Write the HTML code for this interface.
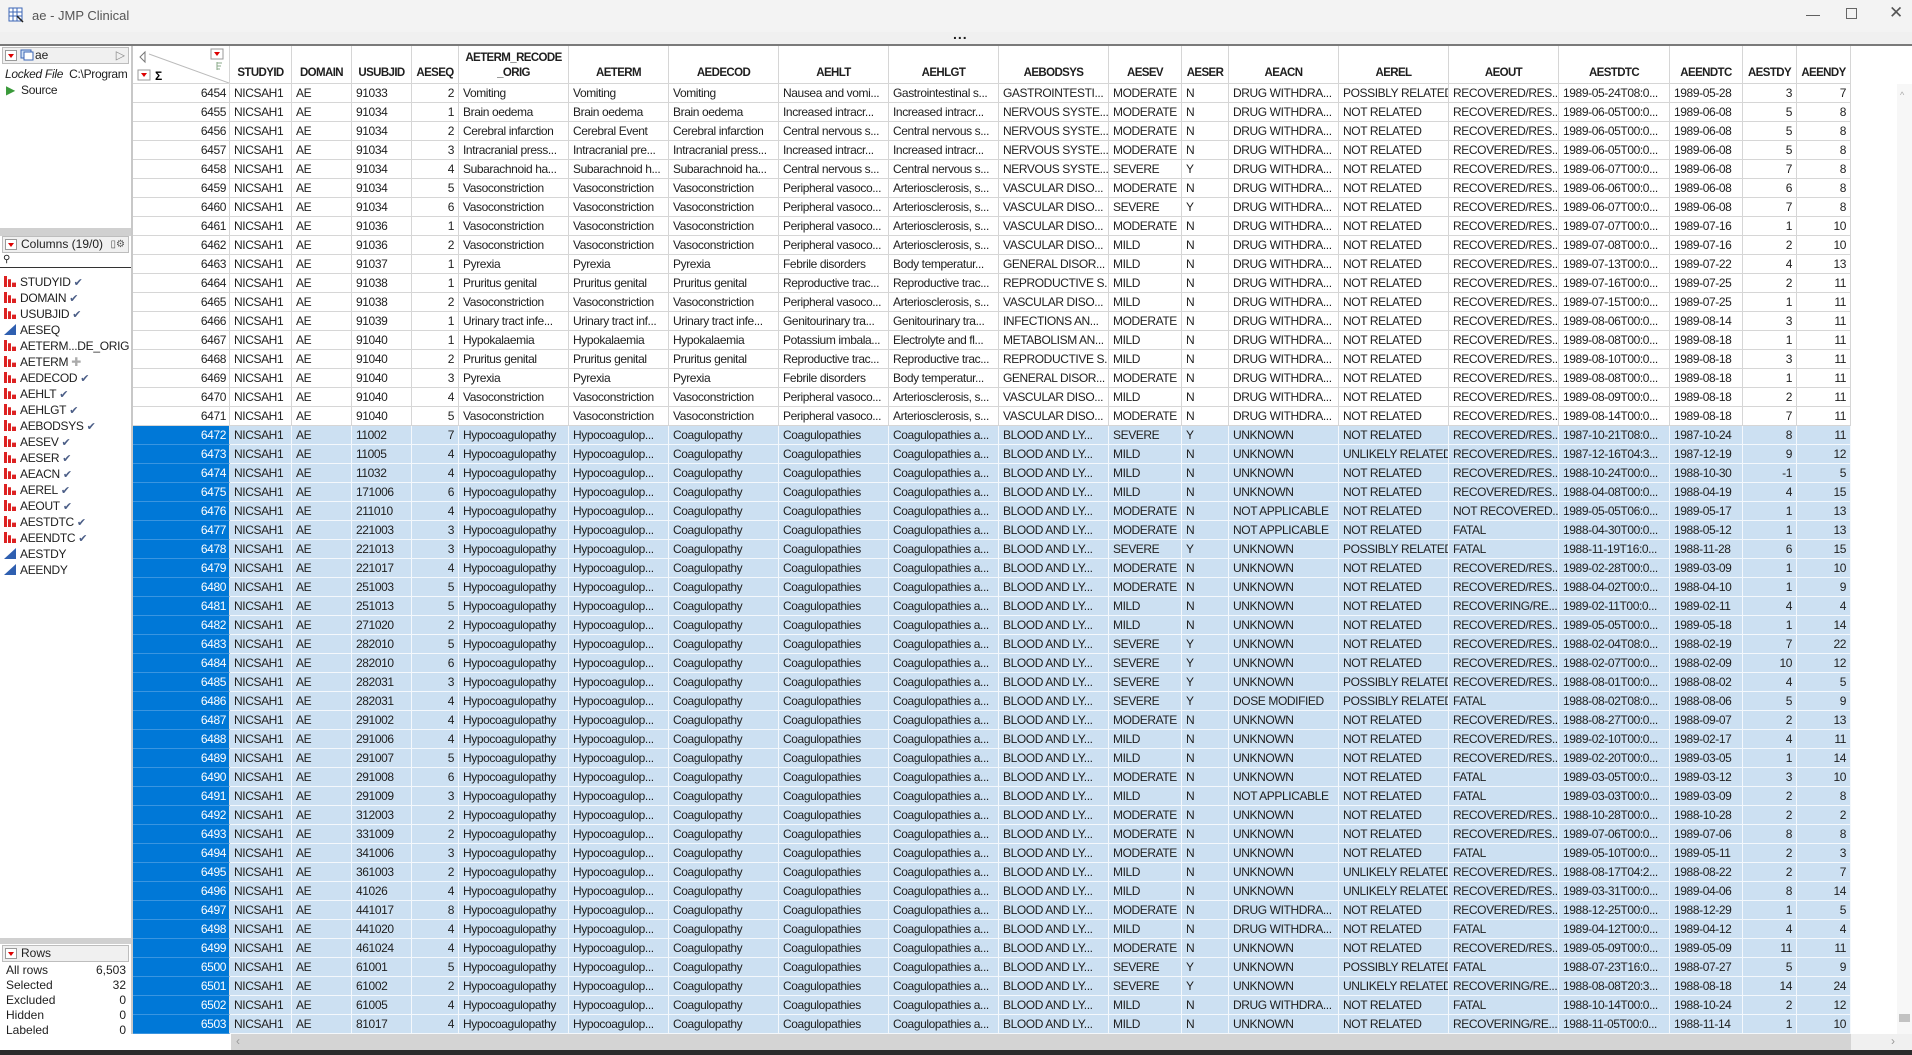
<!DOCTYPE html>
<html><head><meta charset="utf-8"><style>
*{box-sizing:border-box}
body{margin:0;width:1912px;height:1055px;overflow:hidden;background:#fff;font-family:"Liberation Sans",sans-serif;font-size:12px;color:#1e1e1e;position:relative}
.abs{position:absolute}
#tb{left:0;top:0;width:1912px;height:32px;background:#f3f3f3}
#strip{left:0;top:32px;width:1912px;height:12px;background:#f0f0f0}
#dark{left:0;top:44px;width:1912px;height:2px;background:#7a7a7a}
#grid{left:133px;top:46px;border-collapse:separate;border-spacing:0;table-layout:fixed;width:1718px}
#grid td,#grid th{height:19px;padding:0 4px;border-right:1px solid #d6d6d6;border-bottom:1px solid #d6d6d6;white-space:nowrap;overflow:hidden;text-overflow:clip;line-height:18px;font-weight:normal;letter-spacing:-0.4px}
#grid th{height:38px;font-weight:bold;vertical-align:bottom;text-align:center;line-height:15px;padding:0 1px 2px;background:#fff;letter-spacing:-0.6px;font-size:11.5px}
#grid td.r{text-align:right}
#grid td:first-child{text-align:right;padding-right:3px}
#grid tr.s td{background:#cce0f2;border-right-color:#f4f8fc;border-bottom-color:#f4f8fc}
#grid tr.s td:first-child{background:#0078d7;color:#fff;border-bottom-color:#3a95e0;border-right-color:#e0e0e0}
#lp{left:0;top:46px;width:133px;height:988px;background:#fff;border-right:2px solid #c8c8c8}
.hdr{position:absolute;left:2px;width:127px;height:17px;background:#f0f0f0;border:1px solid #bdbdbd;line-height:15px;padding-left:18px}
.tri{position:absolute;left:2px;top:2px;width:12px;height:11px;background:#fff;border:1px solid #999}
.tri:after{content:"";position:absolute;left:2px;top:3px;border-left:3px solid transparent;border-right:3px solid transparent;border-top:4px solid #d00}
.it{position:absolute;left:4px;height:16px;line-height:16px;white-space:nowrap;letter-spacing:-0.3px}
.nom{display:inline-block;width:12px;height:11px;vertical-align:-1px;margin-right:4px;background:#d22;clip-path:polygon(0 0,3px 0,3px 100%,4px 100%,4px 30%,7px 30%,7px 100%,8px 100%,8px 60%,12px 60%,12px 100%,0 100%)}
.con{display:inline-block;width:12px;height:11px;vertical-align:-1px;margin-right:4px;background:#2f5fb0;clip-path:polygon(0 100%,100% 0,100% 100%)}
.ck{color:#4a5d86;font-size:11px;margin-left:3px}
.rw{position:absolute;left:6px;width:120px;height:15px;line-height:15px}
.rw span{float:right}
</style></head><body>
<div id="tb" class="abs">
<svg class="abs" style="left:8px;top:7px" width="16" height="16"><rect x="1" y="1" width="13" height="13" fill="#fff" stroke="#3b66b5"/><path d="M1 5h13M1 9h13M5 1v13M9 1v13" stroke="#3b66b5"/><path d="M9 9l6 6" stroke="#222" stroke-width="1.5"/></svg>
<div class="abs" style="left:32px;top:8px;font-size:13px;color:#555">ae - JMP Clinical</div>
<div class="abs" style="left:1806px;top:6px;font-size:14px;color:#555">—</div>
<div class="abs" style="left:1846px;top:8px;width:11px;height:11px;border:1px solid #666"></div>
<div class="abs" style="left:1889px;top:3px;font-size:17px;color:#555">✕</div>
</div>
<div id="strip" class="abs"><div class="abs" style="left:953px;top:-6px;font-weight:bold;font-size:14px;letter-spacing:1px">...</div></div>
<div id="dark" class="abs"></div>

<div id="lp" class="abs">
<div class="hdr" style="top:1px"><span class="tri"></span><svg style="position:absolute;left:17px;top:1px" width="14" height="13"><rect x="1" y="1" width="10" height="8" fill="#cfe0f5" stroke="#3b66b5"/><rect x="4" y="3" width="9" height="8" fill="#fff" stroke="#3b66b5"/></svg><span style="margin-left:14px">ae</span><span style="position:absolute;right:3px;top:0;color:#888">▷</span></div>
<div class="it" style="top:20px;font-style:italic;left:5px">Locked File <span style="font-style:normal">&nbsp;C:\Program</span></div>
<div class="it" style="top:36px;left:6px"><span style="color:#3a9a3a">▶</span>&nbsp; Source</div>
<div class="abs" style="left:0;top:182px;width:131px;height:8px;background:#d0d0d0"></div>
<div class="hdr" style="top:190px"><span class="tri"></span>Columns (19/0)<span style="position:absolute;right:3px;color:#555;font-size:10px">▯⚙</span></div>
<div class="abs" style="left:0;top:208px;width:131px;height:14px;border-bottom:1px solid #333;font-size:10px;padding-left:3px">⚲</div>
<div class="it" style="top:228px"><span class="nom"></span>STUDYID<span class="ck">✔</span></div>
<div class="it" style="top:244px"><span class="nom"></span>DOMAIN<span class="ck">✔</span></div>
<div class="it" style="top:260px"><span class="nom"></span>USUBJID<span class="ck">✔</span></div>
<div class="it" style="top:276px"><span class="con"></span>AESEQ</div>
<div class="it" style="top:292px"><span class="nom"></span>AETERM...DE_ORIG</div>
<div class="it" style="top:308px"><span class="nom"></span>AETERM<span style="color:#aaa;margin-left:3px">✚</span></div>
<div class="it" style="top:324px"><span class="nom"></span>AEDECOD<span class="ck">✔</span></div>
<div class="it" style="top:340px"><span class="nom"></span>AEHLT<span class="ck">✔</span></div>
<div class="it" style="top:356px"><span class="nom"></span>AEHLGT<span class="ck">✔</span></div>
<div class="it" style="top:372px"><span class="nom"></span>AEBODSYS<span class="ck">✔</span></div>
<div class="it" style="top:388px"><span class="nom"></span>AESEV<span class="ck">✔</span></div>
<div class="it" style="top:404px"><span class="nom"></span>AESER<span class="ck">✔</span></div>
<div class="it" style="top:420px"><span class="nom"></span>AEACN<span class="ck">✔</span></div>
<div class="it" style="top:436px"><span class="nom"></span>AEREL<span class="ck">✔</span></div>
<div class="it" style="top:452px"><span class="nom"></span>AEOUT<span class="ck">✔</span></div>
<div class="it" style="top:468px"><span class="nom"></span>AESTDTC<span class="ck">✔</span></div>
<div class="it" style="top:484px"><span class="nom"></span>AEENDTC<span class="ck">✔</span></div>
<div class="it" style="top:500px"><span class="con"></span>AESTDY</div>
<div class="it" style="top:516px"><span class="con"></span>AEENDY</div>
<div class="abs" style="left:0;top:892px;width:131px;height:6px;background:#d0d0d0"></div>
<div class="hdr" style="top:899px"><span class="tri"></span>Rows</div>
<div class="rw" style="top:917px">All rows<span>6,503</span></div>
<div class="rw" style="top:932px">Selected<span>32</span></div>
<div class="rw" style="top:947px">Excluded<span>0</span></div>
<div class="rw" style="top:962px">Hidden<span>0</span></div>
<div class="rw" style="top:977px">Labeled<span>0</span></div>
</div>

<table id="grid" class="abs">
<colgroup><col style="width:97px"><col style="width:62px"><col style="width:60px"><col style="width:60px"><col style="width:47px"><col style="width:110px"><col style="width:100px"><col style="width:110px"><col style="width:110px"><col style="width:110px"><col style="width:110px"><col style="width:73px"><col style="width:47px"><col style="width:110px"><col style="width:110px"><col style="width:110px"><col style="width:111px"><col style="width:73px"><col style="width:54px"><col style="width:54px"></colgroup>
<tr><th style="position:relative;padding:0"><svg style="position:absolute;left:0;top:0" width="96" height="37"><path d="M12 6l-5 5 5 5z" fill="none" stroke="#777"/><path d="M16 8L96 37" stroke="#bbb"/><rect x="78" y="3" width="12" height="10" fill="#fff" stroke="#999"/><path d="M81 6h6l-3 4z" fill="#d00"/><path d="M84 16v8M84 17h5M84 20h4M84 23h3" stroke="#8a8" /><rect x="5" y="24" width="12" height="10" fill="#fff" stroke="#999"/><path d="M8 27h6l-3 4z" fill="#d00"/><text x="22" y="34" font-size="12" font-weight="bold" font-family="Liberation Sans">Σ</text></svg></th><th>STUDYID</th><th>DOMAIN</th><th>USUBJID</th><th>AESEQ</th><th>AETERM_RECODE<br>_ORIG</th><th>AETERM</th><th>AEDECOD</th><th>AEHLT</th><th>AEHLGT</th><th>AEBODSYS</th><th>AESEV</th><th>AESER</th><th>AEACN</th><th>AEREL</th><th>AEOUT</th><th>AESTDTC</th><th>AEENDTC</th><th>AESTDY</th><th>AEENDY</th></tr>
<tr><td>6454</td><td>NICSAH1</td><td>AE</td><td>91033</td><td class="r">2</td><td>Vomiting</td><td>Vomiting</td><td>Vomiting</td><td>Nausea and vomi...</td><td>Gastrointestinal s...</td><td>GASTROINTESTI...</td><td>MODERATE</td><td>N</td><td>DRUG WITHDRA...</td><td>POSSIBLY RELATED</td><td>RECOVERED/RES...</td><td>1989-05-24T08:0...</td><td>1989-05-28</td><td class="r">3</td><td class="r">7</td></tr>
<tr><td>6455</td><td>NICSAH1</td><td>AE</td><td>91034</td><td class="r">1</td><td>Brain oedema</td><td>Brain oedema</td><td>Brain oedema</td><td>Increased intracr...</td><td>Increased intracr...</td><td>NERVOUS SYSTE...</td><td>MODERATE</td><td>N</td><td>DRUG WITHDRA...</td><td>NOT RELATED</td><td>RECOVERED/RES...</td><td>1989-06-05T00:0...</td><td>1989-06-08</td><td class="r">5</td><td class="r">8</td></tr>
<tr><td>6456</td><td>NICSAH1</td><td>AE</td><td>91034</td><td class="r">2</td><td>Cerebral infarction</td><td>Cerebral Event</td><td>Cerebral infarction</td><td>Central nervous s...</td><td>Central nervous s...</td><td>NERVOUS SYSTE...</td><td>MODERATE</td><td>N</td><td>DRUG WITHDRA...</td><td>NOT RELATED</td><td>RECOVERED/RES...</td><td>1989-06-05T00:0...</td><td>1989-06-08</td><td class="r">5</td><td class="r">8</td></tr>
<tr><td>6457</td><td>NICSAH1</td><td>AE</td><td>91034</td><td class="r">3</td><td>Intracranial press...</td><td>Intracranial pre...</td><td>Intracranial press...</td><td>Increased intracr...</td><td>Increased intracr...</td><td>NERVOUS SYSTE...</td><td>MODERATE</td><td>N</td><td>DRUG WITHDRA...</td><td>NOT RELATED</td><td>RECOVERED/RES...</td><td>1989-06-05T00:0...</td><td>1989-06-08</td><td class="r">5</td><td class="r">8</td></tr>
<tr><td>6458</td><td>NICSAH1</td><td>AE</td><td>91034</td><td class="r">4</td><td>Subarachnoid ha...</td><td>Subarachnoid h...</td><td>Subarachnoid ha...</td><td>Central nervous s...</td><td>Central nervous s...</td><td>NERVOUS SYSTE...</td><td>SEVERE</td><td>Y</td><td>DRUG WITHDRA...</td><td>NOT RELATED</td><td>RECOVERED/RES...</td><td>1989-06-07T00:0...</td><td>1989-06-08</td><td class="r">7</td><td class="r">8</td></tr>
<tr><td>6459</td><td>NICSAH1</td><td>AE</td><td>91034</td><td class="r">5</td><td>Vasoconstriction</td><td>Vasoconstriction</td><td>Vasoconstriction</td><td>Peripheral vasoco...</td><td>Arteriosclerosis, s...</td><td>VASCULAR DISO...</td><td>MODERATE</td><td>N</td><td>DRUG WITHDRA...</td><td>NOT RELATED</td><td>RECOVERED/RES...</td><td>1989-06-06T00:0...</td><td>1989-06-08</td><td class="r">6</td><td class="r">8</td></tr>
<tr><td>6460</td><td>NICSAH1</td><td>AE</td><td>91034</td><td class="r">6</td><td>Vasoconstriction</td><td>Vasoconstriction</td><td>Vasoconstriction</td><td>Peripheral vasoco...</td><td>Arteriosclerosis, s...</td><td>VASCULAR DISO...</td><td>SEVERE</td><td>Y</td><td>DRUG WITHDRA...</td><td>NOT RELATED</td><td>RECOVERED/RES...</td><td>1989-06-07T00:0...</td><td>1989-06-08</td><td class="r">7</td><td class="r">8</td></tr>
<tr><td>6461</td><td>NICSAH1</td><td>AE</td><td>91036</td><td class="r">1</td><td>Vasoconstriction</td><td>Vasoconstriction</td><td>Vasoconstriction</td><td>Peripheral vasoco...</td><td>Arteriosclerosis, s...</td><td>VASCULAR DISO...</td><td>MODERATE</td><td>N</td><td>DRUG WITHDRA...</td><td>NOT RELATED</td><td>RECOVERED/RES...</td><td>1989-07-07T00:0...</td><td>1989-07-16</td><td class="r">1</td><td class="r">10</td></tr>
<tr><td>6462</td><td>NICSAH1</td><td>AE</td><td>91036</td><td class="r">2</td><td>Vasoconstriction</td><td>Vasoconstriction</td><td>Vasoconstriction</td><td>Peripheral vasoco...</td><td>Arteriosclerosis, s...</td><td>VASCULAR DISO...</td><td>MILD</td><td>N</td><td>DRUG WITHDRA...</td><td>NOT RELATED</td><td>RECOVERED/RES...</td><td>1989-07-08T00:0...</td><td>1989-07-16</td><td class="r">2</td><td class="r">10</td></tr>
<tr><td>6463</td><td>NICSAH1</td><td>AE</td><td>91037</td><td class="r">1</td><td>Pyrexia</td><td>Pyrexia</td><td>Pyrexia</td><td>Febrile disorders</td><td>Body temperatur...</td><td>GENERAL DISOR...</td><td>MILD</td><td>N</td><td>DRUG WITHDRA...</td><td>NOT RELATED</td><td>RECOVERED/RES...</td><td>1989-07-13T00:0...</td><td>1989-07-22</td><td class="r">4</td><td class="r">13</td></tr>
<tr><td>6464</td><td>NICSAH1</td><td>AE</td><td>91038</td><td class="r">1</td><td>Pruritus genital</td><td>Pruritus genital</td><td>Pruritus genital</td><td>Reproductive trac...</td><td>Reproductive trac...</td><td>REPRODUCTIVE S...</td><td>MILD</td><td>N</td><td>DRUG WITHDRA...</td><td>NOT RELATED</td><td>RECOVERED/RES...</td><td>1989-07-16T00:0...</td><td>1989-07-25</td><td class="r">2</td><td class="r">11</td></tr>
<tr><td>6465</td><td>NICSAH1</td><td>AE</td><td>91038</td><td class="r">2</td><td>Vasoconstriction</td><td>Vasoconstriction</td><td>Vasoconstriction</td><td>Peripheral vasoco...</td><td>Arteriosclerosis, s...</td><td>VASCULAR DISO...</td><td>MILD</td><td>N</td><td>DRUG WITHDRA...</td><td>NOT RELATED</td><td>RECOVERED/RES...</td><td>1989-07-15T00:0...</td><td>1989-07-25</td><td class="r">1</td><td class="r">11</td></tr>
<tr><td>6466</td><td>NICSAH1</td><td>AE</td><td>91039</td><td class="r">1</td><td>Urinary tract infe...</td><td>Urinary tract inf...</td><td>Urinary tract infe...</td><td>Genitourinary tra...</td><td>Genitourinary tra...</td><td>INFECTIONS AN...</td><td>MODERATE</td><td>N</td><td>DRUG WITHDRA...</td><td>NOT RELATED</td><td>RECOVERED/RES...</td><td>1989-08-06T00:0...</td><td>1989-08-14</td><td class="r">3</td><td class="r">11</td></tr>
<tr><td>6467</td><td>NICSAH1</td><td>AE</td><td>91040</td><td class="r">1</td><td>Hypokalaemia</td><td>Hypokalaemia</td><td>Hypokalaemia</td><td>Potassium imbala...</td><td>Electrolyte and fl...</td><td>METABOLISM AN...</td><td>MILD</td><td>N</td><td>DRUG WITHDRA...</td><td>NOT RELATED</td><td>RECOVERED/RES...</td><td>1989-08-08T00:0...</td><td>1989-08-18</td><td class="r">1</td><td class="r">11</td></tr>
<tr><td>6468</td><td>NICSAH1</td><td>AE</td><td>91040</td><td class="r">2</td><td>Pruritus genital</td><td>Pruritus genital</td><td>Pruritus genital</td><td>Reproductive trac...</td><td>Reproductive trac...</td><td>REPRODUCTIVE S...</td><td>MILD</td><td>N</td><td>DRUG WITHDRA...</td><td>NOT RELATED</td><td>RECOVERED/RES...</td><td>1989-08-10T00:0...</td><td>1989-08-18</td><td class="r">3</td><td class="r">11</td></tr>
<tr><td>6469</td><td>NICSAH1</td><td>AE</td><td>91040</td><td class="r">3</td><td>Pyrexia</td><td>Pyrexia</td><td>Pyrexia</td><td>Febrile disorders</td><td>Body temperatur...</td><td>GENERAL DISOR...</td><td>MODERATE</td><td>N</td><td>DRUG WITHDRA...</td><td>NOT RELATED</td><td>RECOVERED/RES...</td><td>1989-08-08T00:0...</td><td>1989-08-18</td><td class="r">1</td><td class="r">11</td></tr>
<tr><td>6470</td><td>NICSAH1</td><td>AE</td><td>91040</td><td class="r">4</td><td>Vasoconstriction</td><td>Vasoconstriction</td><td>Vasoconstriction</td><td>Peripheral vasoco...</td><td>Arteriosclerosis, s...</td><td>VASCULAR DISO...</td><td>MILD</td><td>N</td><td>DRUG WITHDRA...</td><td>NOT RELATED</td><td>RECOVERED/RES...</td><td>1989-08-09T00:0...</td><td>1989-08-18</td><td class="r">2</td><td class="r">11</td></tr>
<tr><td>6471</td><td>NICSAH1</td><td>AE</td><td>91040</td><td class="r">5</td><td>Vasoconstriction</td><td>Vasoconstriction</td><td>Vasoconstriction</td><td>Peripheral vasoco...</td><td>Arteriosclerosis, s...</td><td>VASCULAR DISO...</td><td>MODERATE</td><td>N</td><td>DRUG WITHDRA...</td><td>NOT RELATED</td><td>RECOVERED/RES...</td><td>1989-08-14T00:0...</td><td>1989-08-18</td><td class="r">7</td><td class="r">11</td></tr>
<tr class="s"><td>6472</td><td>NICSAH1</td><td>AE</td><td>11002</td><td class="r">7</td><td>Hypocoagulopathy</td><td>Hypocoagulop...</td><td>Coagulopathy</td><td>Coagulopathies</td><td>Coagulopathies a...</td><td>BLOOD AND LY...</td><td>SEVERE</td><td>Y</td><td>UNKNOWN</td><td>NOT RELATED</td><td>RECOVERED/RES...</td><td>1987-10-21T08:0...</td><td>1987-10-24</td><td class="r">8</td><td class="r">11</td></tr>
<tr class="s"><td>6473</td><td>NICSAH1</td><td>AE</td><td>11005</td><td class="r">4</td><td>Hypocoagulopathy</td><td>Hypocoagulop...</td><td>Coagulopathy</td><td>Coagulopathies</td><td>Coagulopathies a...</td><td>BLOOD AND LY...</td><td>MILD</td><td>N</td><td>UNKNOWN</td><td>UNLIKELY RELATED</td><td>RECOVERED/RES...</td><td>1987-12-16T04:3...</td><td>1987-12-19</td><td class="r">9</td><td class="r">12</td></tr>
<tr class="s"><td>6474</td><td>NICSAH1</td><td>AE</td><td>11032</td><td class="r">4</td><td>Hypocoagulopathy</td><td>Hypocoagulop...</td><td>Coagulopathy</td><td>Coagulopathies</td><td>Coagulopathies a...</td><td>BLOOD AND LY...</td><td>MILD</td><td>N</td><td>UNKNOWN</td><td>NOT RELATED</td><td>RECOVERED/RES...</td><td>1988-10-24T00:0...</td><td>1988-10-30</td><td class="r">-1</td><td class="r">5</td></tr>
<tr class="s"><td>6475</td><td>NICSAH1</td><td>AE</td><td>171006</td><td class="r">6</td><td>Hypocoagulopathy</td><td>Hypocoagulop...</td><td>Coagulopathy</td><td>Coagulopathies</td><td>Coagulopathies a...</td><td>BLOOD AND LY...</td><td>MILD</td><td>N</td><td>UNKNOWN</td><td>NOT RELATED</td><td>RECOVERED/RES...</td><td>1988-04-08T00:0...</td><td>1988-04-19</td><td class="r">4</td><td class="r">15</td></tr>
<tr class="s"><td>6476</td><td>NICSAH1</td><td>AE</td><td>211010</td><td class="r">4</td><td>Hypocoagulopathy</td><td>Hypocoagulop...</td><td>Coagulopathy</td><td>Coagulopathies</td><td>Coagulopathies a...</td><td>BLOOD AND LY...</td><td>MODERATE</td><td>N</td><td>NOT APPLICABLE</td><td>NOT RELATED</td><td>NOT RECOVERED...</td><td>1989-05-05T06:0...</td><td>1989-05-17</td><td class="r">1</td><td class="r">13</td></tr>
<tr class="s"><td>6477</td><td>NICSAH1</td><td>AE</td><td>221003</td><td class="r">3</td><td>Hypocoagulopathy</td><td>Hypocoagulop...</td><td>Coagulopathy</td><td>Coagulopathies</td><td>Coagulopathies a...</td><td>BLOOD AND LY...</td><td>MODERATE</td><td>N</td><td>NOT APPLICABLE</td><td>NOT RELATED</td><td>FATAL</td><td>1988-04-30T00:0...</td><td>1988-05-12</td><td class="r">1</td><td class="r">13</td></tr>
<tr class="s"><td>6478</td><td>NICSAH1</td><td>AE</td><td>221013</td><td class="r">3</td><td>Hypocoagulopathy</td><td>Hypocoagulop...</td><td>Coagulopathy</td><td>Coagulopathies</td><td>Coagulopathies a...</td><td>BLOOD AND LY...</td><td>SEVERE</td><td>Y</td><td>UNKNOWN</td><td>POSSIBLY RELATED</td><td>FATAL</td><td>1988-11-19T16:0...</td><td>1988-11-28</td><td class="r">6</td><td class="r">15</td></tr>
<tr class="s"><td>6479</td><td>NICSAH1</td><td>AE</td><td>221017</td><td class="r">4</td><td>Hypocoagulopathy</td><td>Hypocoagulop...</td><td>Coagulopathy</td><td>Coagulopathies</td><td>Coagulopathies a...</td><td>BLOOD AND LY...</td><td>MODERATE</td><td>N</td><td>UNKNOWN</td><td>NOT RELATED</td><td>RECOVERED/RES...</td><td>1989-02-28T00:0...</td><td>1989-03-09</td><td class="r">1</td><td class="r">10</td></tr>
<tr class="s"><td>6480</td><td>NICSAH1</td><td>AE</td><td>251003</td><td class="r">5</td><td>Hypocoagulopathy</td><td>Hypocoagulop...</td><td>Coagulopathy</td><td>Coagulopathies</td><td>Coagulopathies a...</td><td>BLOOD AND LY...</td><td>MODERATE</td><td>N</td><td>UNKNOWN</td><td>NOT RELATED</td><td>RECOVERED/RES...</td><td>1988-04-02T00:0...</td><td>1988-04-10</td><td class="r">1</td><td class="r">9</td></tr>
<tr class="s"><td>6481</td><td>NICSAH1</td><td>AE</td><td>251013</td><td class="r">5</td><td>Hypocoagulopathy</td><td>Hypocoagulop...</td><td>Coagulopathy</td><td>Coagulopathies</td><td>Coagulopathies a...</td><td>BLOOD AND LY...</td><td>MILD</td><td>N</td><td>UNKNOWN</td><td>NOT RELATED</td><td>RECOVERING/RE...</td><td>1989-02-11T00:0...</td><td>1989-02-11</td><td class="r">4</td><td class="r">4</td></tr>
<tr class="s"><td>6482</td><td>NICSAH1</td><td>AE</td><td>271020</td><td class="r">2</td><td>Hypocoagulopathy</td><td>Hypocoagulop...</td><td>Coagulopathy</td><td>Coagulopathies</td><td>Coagulopathies a...</td><td>BLOOD AND LY...</td><td>MILD</td><td>N</td><td>UNKNOWN</td><td>NOT RELATED</td><td>RECOVERED/RES...</td><td>1989-05-05T00:0...</td><td>1989-05-18</td><td class="r">1</td><td class="r">14</td></tr>
<tr class="s"><td>6483</td><td>NICSAH1</td><td>AE</td><td>282010</td><td class="r">5</td><td>Hypocoagulopathy</td><td>Hypocoagulop...</td><td>Coagulopathy</td><td>Coagulopathies</td><td>Coagulopathies a...</td><td>BLOOD AND LY...</td><td>SEVERE</td><td>Y</td><td>UNKNOWN</td><td>NOT RELATED</td><td>RECOVERED/RES...</td><td>1988-02-04T08:0...</td><td>1988-02-19</td><td class="r">7</td><td class="r">22</td></tr>
<tr class="s"><td>6484</td><td>NICSAH1</td><td>AE</td><td>282010</td><td class="r">6</td><td>Hypocoagulopathy</td><td>Hypocoagulop...</td><td>Coagulopathy</td><td>Coagulopathies</td><td>Coagulopathies a...</td><td>BLOOD AND LY...</td><td>SEVERE</td><td>Y</td><td>UNKNOWN</td><td>NOT RELATED</td><td>RECOVERED/RES...</td><td>1988-02-07T00:0...</td><td>1988-02-09</td><td class="r">10</td><td class="r">12</td></tr>
<tr class="s"><td>6485</td><td>NICSAH1</td><td>AE</td><td>282031</td><td class="r">3</td><td>Hypocoagulopathy</td><td>Hypocoagulop...</td><td>Coagulopathy</td><td>Coagulopathies</td><td>Coagulopathies a...</td><td>BLOOD AND LY...</td><td>SEVERE</td><td>Y</td><td>UNKNOWN</td><td>POSSIBLY RELATED</td><td>RECOVERED/RES...</td><td>1988-08-01T00:0...</td><td>1988-08-02</td><td class="r">4</td><td class="r">5</td></tr>
<tr class="s"><td>6486</td><td>NICSAH1</td><td>AE</td><td>282031</td><td class="r">4</td><td>Hypocoagulopathy</td><td>Hypocoagulop...</td><td>Coagulopathy</td><td>Coagulopathies</td><td>Coagulopathies a...</td><td>BLOOD AND LY...</td><td>SEVERE</td><td>Y</td><td>DOSE MODIFIED</td><td>POSSIBLY RELATED</td><td>FATAL</td><td>1988-08-02T08:0...</td><td>1988-08-06</td><td class="r">5</td><td class="r">9</td></tr>
<tr class="s"><td>6487</td><td>NICSAH1</td><td>AE</td><td>291002</td><td class="r">4</td><td>Hypocoagulopathy</td><td>Hypocoagulop...</td><td>Coagulopathy</td><td>Coagulopathies</td><td>Coagulopathies a...</td><td>BLOOD AND LY...</td><td>MODERATE</td><td>N</td><td>UNKNOWN</td><td>NOT RELATED</td><td>RECOVERED/RES...</td><td>1988-08-27T00:0...</td><td>1988-09-07</td><td class="r">2</td><td class="r">13</td></tr>
<tr class="s"><td>6488</td><td>NICSAH1</td><td>AE</td><td>291006</td><td class="r">4</td><td>Hypocoagulopathy</td><td>Hypocoagulop...</td><td>Coagulopathy</td><td>Coagulopathies</td><td>Coagulopathies a...</td><td>BLOOD AND LY...</td><td>MILD</td><td>N</td><td>UNKNOWN</td><td>NOT RELATED</td><td>RECOVERED/RES...</td><td>1989-02-10T00:0...</td><td>1989-02-17</td><td class="r">4</td><td class="r">11</td></tr>
<tr class="s"><td>6489</td><td>NICSAH1</td><td>AE</td><td>291007</td><td class="r">5</td><td>Hypocoagulopathy</td><td>Hypocoagulop...</td><td>Coagulopathy</td><td>Coagulopathies</td><td>Coagulopathies a...</td><td>BLOOD AND LY...</td><td>MILD</td><td>N</td><td>UNKNOWN</td><td>NOT RELATED</td><td>RECOVERED/RES...</td><td>1989-02-20T00:0...</td><td>1989-03-05</td><td class="r">1</td><td class="r">14</td></tr>
<tr class="s"><td>6490</td><td>NICSAH1</td><td>AE</td><td>291008</td><td class="r">6</td><td>Hypocoagulopathy</td><td>Hypocoagulop...</td><td>Coagulopathy</td><td>Coagulopathies</td><td>Coagulopathies a...</td><td>BLOOD AND LY...</td><td>MODERATE</td><td>N</td><td>UNKNOWN</td><td>NOT RELATED</td><td>FATAL</td><td>1989-03-05T00:0...</td><td>1989-03-12</td><td class="r">3</td><td class="r">10</td></tr>
<tr class="s"><td>6491</td><td>NICSAH1</td><td>AE</td><td>291009</td><td class="r">3</td><td>Hypocoagulopathy</td><td>Hypocoagulop...</td><td>Coagulopathy</td><td>Coagulopathies</td><td>Coagulopathies a...</td><td>BLOOD AND LY...</td><td>MILD</td><td>N</td><td>NOT APPLICABLE</td><td>NOT RELATED</td><td>FATAL</td><td>1989-03-03T00:0...</td><td>1989-03-09</td><td class="r">2</td><td class="r">8</td></tr>
<tr class="s"><td>6492</td><td>NICSAH1</td><td>AE</td><td>312003</td><td class="r">2</td><td>Hypocoagulopathy</td><td>Hypocoagulop...</td><td>Coagulopathy</td><td>Coagulopathies</td><td>Coagulopathies a...</td><td>BLOOD AND LY...</td><td>MODERATE</td><td>N</td><td>UNKNOWN</td><td>NOT RELATED</td><td>RECOVERED/RES...</td><td>1988-10-28T00:0...</td><td>1988-10-28</td><td class="r">2</td><td class="r">2</td></tr>
<tr class="s"><td>6493</td><td>NICSAH1</td><td>AE</td><td>331009</td><td class="r">2</td><td>Hypocoagulopathy</td><td>Hypocoagulop...</td><td>Coagulopathy</td><td>Coagulopathies</td><td>Coagulopathies a...</td><td>BLOOD AND LY...</td><td>MODERATE</td><td>N</td><td>UNKNOWN</td><td>NOT RELATED</td><td>RECOVERED/RES...</td><td>1989-07-06T00:0...</td><td>1989-07-06</td><td class="r">8</td><td class="r">8</td></tr>
<tr class="s"><td>6494</td><td>NICSAH1</td><td>AE</td><td>341006</td><td class="r">3</td><td>Hypocoagulopathy</td><td>Hypocoagulop...</td><td>Coagulopathy</td><td>Coagulopathies</td><td>Coagulopathies a...</td><td>BLOOD AND LY...</td><td>MODERATE</td><td>N</td><td>UNKNOWN</td><td>NOT RELATED</td><td>FATAL</td><td>1989-05-10T00:0...</td><td>1989-05-11</td><td class="r">2</td><td class="r">3</td></tr>
<tr class="s"><td>6495</td><td>NICSAH1</td><td>AE</td><td>361003</td><td class="r">2</td><td>Hypocoagulopathy</td><td>Hypocoagulop...</td><td>Coagulopathy</td><td>Coagulopathies</td><td>Coagulopathies a...</td><td>BLOOD AND LY...</td><td>MILD</td><td>N</td><td>UNKNOWN</td><td>UNLIKELY RELATED</td><td>RECOVERED/RES...</td><td>1988-08-17T04:2...</td><td>1988-08-22</td><td class="r">2</td><td class="r">7</td></tr>
<tr class="s"><td>6496</td><td>NICSAH1</td><td>AE</td><td>41026</td><td class="r">4</td><td>Hypocoagulopathy</td><td>Hypocoagulop...</td><td>Coagulopathy</td><td>Coagulopathies</td><td>Coagulopathies a...</td><td>BLOOD AND LY...</td><td>MILD</td><td>N</td><td>UNKNOWN</td><td>UNLIKELY RELATED</td><td>RECOVERED/RES...</td><td>1989-03-31T00:0...</td><td>1989-04-06</td><td class="r">8</td><td class="r">14</td></tr>
<tr class="s"><td>6497</td><td>NICSAH1</td><td>AE</td><td>441017</td><td class="r">8</td><td>Hypocoagulopathy</td><td>Hypocoagulop...</td><td>Coagulopathy</td><td>Coagulopathies</td><td>Coagulopathies a...</td><td>BLOOD AND LY...</td><td>MODERATE</td><td>N</td><td>DRUG WITHDRA...</td><td>NOT RELATED</td><td>RECOVERED/RES...</td><td>1988-12-25T00:0...</td><td>1988-12-29</td><td class="r">1</td><td class="r">5</td></tr>
<tr class="s"><td>6498</td><td>NICSAH1</td><td>AE</td><td>441020</td><td class="r">4</td><td>Hypocoagulopathy</td><td>Hypocoagulop...</td><td>Coagulopathy</td><td>Coagulopathies</td><td>Coagulopathies a...</td><td>BLOOD AND LY...</td><td>MILD</td><td>N</td><td>DRUG WITHDRA...</td><td>NOT RELATED</td><td>FATAL</td><td>1989-04-12T00:0...</td><td>1989-04-12</td><td class="r">4</td><td class="r">4</td></tr>
<tr class="s"><td>6499</td><td>NICSAH1</td><td>AE</td><td>461024</td><td class="r">4</td><td>Hypocoagulopathy</td><td>Hypocoagulop...</td><td>Coagulopathy</td><td>Coagulopathies</td><td>Coagulopathies a...</td><td>BLOOD AND LY...</td><td>MODERATE</td><td>N</td><td>UNKNOWN</td><td>NOT RELATED</td><td>RECOVERED/RES...</td><td>1989-05-09T00:0...</td><td>1989-05-09</td><td class="r">11</td><td class="r">11</td></tr>
<tr class="s"><td>6500</td><td>NICSAH1</td><td>AE</td><td>61001</td><td class="r">5</td><td>Hypocoagulopathy</td><td>Hypocoagulop...</td><td>Coagulopathy</td><td>Coagulopathies</td><td>Coagulopathies a...</td><td>BLOOD AND LY...</td><td>SEVERE</td><td>Y</td><td>UNKNOWN</td><td>POSSIBLY RELATED</td><td>FATAL</td><td>1988-07-23T16:0...</td><td>1988-07-27</td><td class="r">5</td><td class="r">9</td></tr>
<tr class="s"><td>6501</td><td>NICSAH1</td><td>AE</td><td>61002</td><td class="r">2</td><td>Hypocoagulopathy</td><td>Hypocoagulop...</td><td>Coagulopathy</td><td>Coagulopathies</td><td>Coagulopathies a...</td><td>BLOOD AND LY...</td><td>SEVERE</td><td>Y</td><td>UNKNOWN</td><td>UNLIKELY RELATED</td><td>RECOVERING/RE...</td><td>1988-08-08T20:3...</td><td>1988-08-18</td><td class="r">14</td><td class="r">24</td></tr>
<tr class="s"><td>6502</td><td>NICSAH1</td><td>AE</td><td>61005</td><td class="r">4</td><td>Hypocoagulopathy</td><td>Hypocoagulop...</td><td>Coagulopathy</td><td>Coagulopathies</td><td>Coagulopathies a...</td><td>BLOOD AND LY...</td><td>MILD</td><td>N</td><td>DRUG WITHDRA...</td><td>NOT RELATED</td><td>FATAL</td><td>1988-10-14T00:0...</td><td>1988-10-24</td><td class="r">2</td><td class="r">12</td></tr>
<tr class="s"><td>6503</td><td>NICSAH1</td><td>AE</td><td>81017</td><td class="r">4</td><td>Hypocoagulopathy</td><td>Hypocoagulop...</td><td>Coagulopathy</td><td>Coagulopathies</td><td>Coagulopathies a...</td><td>BLOOD AND LY...</td><td>MILD</td><td>N</td><td>UNKNOWN</td><td>NOT RELATED</td><td>RECOVERING/RE...</td><td>1988-11-05T00:0...</td><td>1988-11-14</td><td class="r">1</td><td class="r">10</td></tr>
</table>

<div class="abs" style="left:1897px;top:84px;width:15px;height:950px;background:#f7f7f7"><div class="abs" style="left:3px;top:6px;color:#aaa;font-size:9px">^</div><div class="abs" style="left:2px;top:930px;width:11px;height:8px;background:#c2c2c2"></div></div>
<div class="abs" style="left:133px;top:1034px;width:98px;height:16px;background:#fff"></div>
<div class="abs" style="left:231px;top:1034px;width:1620px;height:16px;background:#d4d4d4"><span class="abs" style="left:5px;top:0;color:#999;font-size:12px">‹</span></div>
<div class="abs" style="left:1851px;top:1034px;width:61px;height:16px;background:#f0f0f0"><span class="abs" style="left:40px;top:0;color:#999">›</span></div>
<div class="abs" style="left:0;top:1050px;width:1912px;height:5px;background:#2b2b2b"></div>
</body></html>
